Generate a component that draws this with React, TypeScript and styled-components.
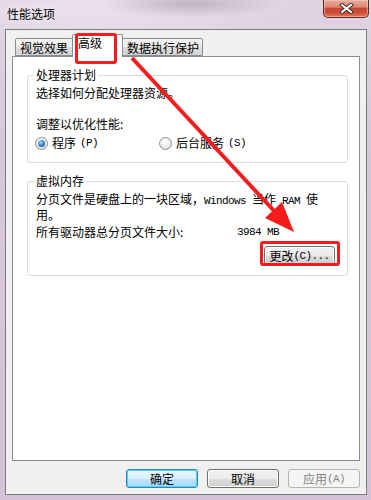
import styled, { createGlobalStyle } from 'styled-components';

const GlobalStyle = createGlobalStyle`
  html, body {
    margin: 0;
    padding: 0;
  }
  body {
    width: 371px;
    height: 500px;
    overflow: hidden;
    font-family: "Noto Sans CJK SC", "Liberation Sans", sans-serif;
    font-size: 12px;
    color: #000;
    background:
      radial-gradient(ellipse 90px 14px at 190px 4px, rgba(120, 110, 125, 0.35), transparent),
      radial-gradient(ellipse 200px 40px at 90px 10px, rgba(240, 232, 242, 0.7), transparent),
      linear-gradient(180deg, #e0d4e3 0%, #d6c6da 30%, #d4c3d8 100%);
  }
`;

const Window = styled.div`
  position: relative;
  width: 371px;
  height: 500px;
  display: flex;
  flex-direction: column;
`;

const TitleBar = styled.div`
  height: 29px;
  display: flex;
  justify-content: space-between;
  align-items: flex-start;
`;

const Caption = styled.div`
  padding: 6px 0 0 7px;
  line-height: 16px;
  font-size: 12px;
  text-shadow: 0 0 6px rgba(255, 255, 255, 0.9);
`;

const CloseButton = styled.div`
  width: 46px;
  height: 18px;
  margin-right: 2px;
  box-sizing: border-box;
  border: 1px solid #5e2a22;
  border-top: none;
  border-radius: 0 0 5px 5px;
  background: linear-gradient(
    180deg,
    #e8aa9c 0%,
    #dd8a78 40%,
    #c9472f 50%,
    #cf4f36 75%,
    #e17a5e 100%
  );
  box-shadow: inset 0 0 0 1px rgba(255, 210, 200, 0.5);
  display: flex;
  align-items: center;
  justify-content: center;
`;

const Client = styled.div`
  margin-left: 5px;
  width: 362px;
  height: 466px;
  box-sizing: border-box;
  border: 1px solid #7c7c7c;
  background: #f0f0f0;
  padding: 4px 6px 6px 6px;
  display: flex;
  flex-direction: column;
`;

const TabStrip = styled.div`
  height: 22px;
  display: flex;
  align-items: flex-end;
  padding-left: 3px;
`;

const Tab = styled.div<{ $w: number; $active?: boolean; $pad: number }>`
  position: relative;
  box-sizing: border-box;
  width: ${(p) => p.$w}px;
  height: ${(p) => (p.$active ? 23 : 18)}px;
  margin-bottom: ${(p) => (p.$active ? -1 : 0)}px;
  padding-left: ${(p) => p.$pad}px;
  padding-top: ${(p) => (p.$active ? 1 : 2)}px;
  line-height: 14px;
  white-space: nowrap;
  border: 1px solid #898c95;
  border-bottom: ${(p) => (p.$active ? 'none' : '1px solid #898c95')};
  border-radius: 2px 2px 0 0;
  background: ${(p) =>
    p.$active ? '#fff' : 'linear-gradient(180deg, #f4f4f4 0%, #ececec 50%, #dedede 51%, #d4d4d4 100%)'};
  z-index: ${(p) => (p.$active ? 2 : 1)};
  & + & {
    margin-left: -1px;
  }
`;

const Panel = styled.div`
  height: 405px;
  box-sizing: border-box;
  border: 1px solid #898c95;
  background: #fff;
  padding: 11px 11px 0 14px;
  display: flex;
  flex-direction: column;
`;

const Group = styled.fieldset<{ $gap?: number }>`
  margin: ${(p) => p.$gap ?? 0}px 0 0 0;
  padding: 4px 12px ${(p) => (p.$gap ? 10 : 12)}px 8px;
  min-width: 0;
  border: 1px solid #d5dfe5;
  border-radius: 3px;
`;

const Legend = styled.legend`
  padding: 0 2px;
  margin-left: -2px;
  line-height: 14px;
`;

const Line = styled.div<{ $top?: number; $lh?: number }>`
  margin-top: ${(p) => p.$top ?? 0}px;
  line-height: ${(p) => p.$lh ?? 14}px;
  white-space: nowrap;
`;

/* half-width latin, like SimSun: 6px per glyph */
const Latin = styled.span`
  font-family: "Liberation Mono", "DejaVu Sans Mono", monospace;
  font-size: 11px;
  letter-spacing: -0.6px;
`;

const RadioRow = styled.div`
  margin-top: 5px;
  margin-left: -1px;
  display: grid;
  grid-template-columns: 124px auto;
  line-height: 14px;
`;

const RadioItem = styled.label`
  display: flex;
  align-items: center;
  gap: 4px;
  white-space: nowrap;
`;

const RadioDot = styled.span<{ $checked?: boolean }>`
  width: 13px;
  height: 13px;
  box-sizing: border-box;
  border-radius: 50%;
  border: 1px solid #8f8f8f;
  background: radial-gradient(circle at 40% 35%, #ffffff 0%, #e8e8e8 60%, #cfcfcf 100%);
  display: flex;
  align-items: center;
  justify-content: center;
  &::after {
    content: '';
    display: ${(p) => (p.$checked ? 'block' : 'none')};
    width: 7px;
    height: 7px;
    border-radius: 50%;
    background: radial-gradient(circle at 40% 35%, #9fd6f7 0%, #2a7ec4 55%, #0d3f77 100%);
  }
`;

const SizeRow = styled.div`
  margin-top: 4px;
  display: grid;
  grid-template-columns: 201px auto;
  line-height: 14px;
  white-space: nowrap;
`;

const ChangeRow = styled.div`
  margin-top: 7px;
  display: flex;
  justify-content: flex-end;
`;

const PushButton = styled.div<{ $w: number; $kind?: 'default' | 'disabled' }>`
  width: ${(p) => p.$w}px;
  height: 19px;
  box-sizing: border-box;
  border-radius: 3px;
  border: 1px solid
    ${(p) => (p.$kind === 'default' ? '#3c7fb1' : p.$kind === 'disabled' ? '#b5b5b5' : '#707070')};
  background: ${(p) =>
    p.$kind === 'disabled'
      ? '#f4f4f4'
      : p.$kind === 'default'
      ? 'linear-gradient(180deg, #eaf6fd 0%, #d9f0fc 50%, #bee6fd 51%, #a7d9f5 100%)'
      : 'linear-gradient(180deg, #f2f2f2 0%, #ebebeb 50%, #dddddd 51%, #cfcfcf 100%)'};
  box-shadow: ${(p) =>
    p.$kind === 'default'
      ? 'inset 0 0 0 1px #48d8fb'
      : p.$kind === 'disabled'
      ? 'none'
      : 'inset 0 0 0 1px #fcfcfc'};
  color: ${(p) => (p.$kind === 'disabled' ? '#838383' : '#000')};
  display: flex;
  align-items: center;
  justify-content: center;
  line-height: 14px;
  white-space: nowrap;
`;

const ButtonBar = styled.div`
  margin-top: 8px;
  display: flex;
  justify-content: flex-end;
  gap: 9px;
`;

const Highlight = styled.div<{ $x: number; $y: number; $w: number; $h: number }>`
  position: absolute;
  left: ${(p) => p.$x}px;
  top: ${(p) => p.$y}px;
  width: ${(p) => p.$w}px;
  height: ${(p) => p.$h}px;
  box-sizing: border-box;
  border: 3px solid #f51c1c;
  border-radius: 3px;
  pointer-events: none;
  z-index: 5;
`;

const ArrowLayer = styled.svg`
  position: absolute;
  left: 0;
  top: 0;
  pointer-events: none;
  z-index: 6;
`;

export default function App() {
  return (
    <>
      <GlobalStyle />
      <Window>
        <TitleBar>
          <Caption>性能选项</Caption>
          <CloseButton>
            <svg width="15" height="11" viewBox="0 0 15 11">
              <path d="M3 2 L12 9 M12 2 L3 9" stroke="#3a2a2a" strokeWidth="4" strokeLinecap="square" />
              <path d="M3 2 L12 9 M12 2 L3 9" stroke="#ffffff" strokeWidth="2" strokeLinecap="square" />
            </svg>
          </CloseButton>
        </TitleBar>

        <Client>
          <TabStrip>
            <Tab $w={58} $pad={4}>视觉效果</Tab>
            <Tab $w={51} $pad={5} $active>高级</Tab>
            <Tab $w={81} $pad={4}>数据执行保护</Tab>
          </TabStrip>

          <Panel>
            <Group>
              <Legend>处理器计划</Legend>
              <Line>选择如何分配处理器资源。</Line>
              <Line $top={17}>调整以优化性能:</Line>
              <RadioRow>
                <RadioItem>
                  <RadioDot $checked />
                  程序<Latin>(P)</Latin>
                </RadioItem>
                <RadioItem>
                  <RadioDot />
                  后台服务<Latin>(S)</Latin>
                </RadioItem>
              </RadioRow>
            </Group>

            <Group $gap={11}>
              <Legend>虚拟内存</Legend>
              <Line $lh={13}>
                分页文件是硬盘上的一块区域，<Latin>Windows </Latin>当作<Latin> RAM </Latin>使
                <br />
                用。
              </Line>
              <SizeRow>
                <span>所有驱动器总分页文件大小:</span>
                <Latin>3984 MB</Latin>
              </SizeRow>
              <ChangeRow>
                <PushButton $w={71}>
                  更改<Latin>(C)...</Latin>
                </PushButton>
              </ChangeRow>
            </Group>
          </Panel>

          <ButtonBar>
            <PushButton $w={72} $kind="default">确定</PushButton>
            <PushButton $w={72}>取消</PushButton>
            <PushButton $w={72} $kind="disabled">
              应用<Latin>(A)</Latin>
            </PushButton>
          </ButtonBar>
        </Client>

        <Highlight $x={75} $y={33} $w={42} $h={31} />
        <Highlight $x={260} $y={241} $w={80} $h={25} />

        <ArrowLayer width="371" height="500" viewBox="0 0 371 500">
          <line x1="132" y1="58" x2="276" y2="213" stroke="#f51c1c" strokeWidth="4" />
          <polygon points="294,232 265,218 282,202" fill="#f51c1c" />
        </ArrowLayer>
      </Window>
    </>
  );
}
